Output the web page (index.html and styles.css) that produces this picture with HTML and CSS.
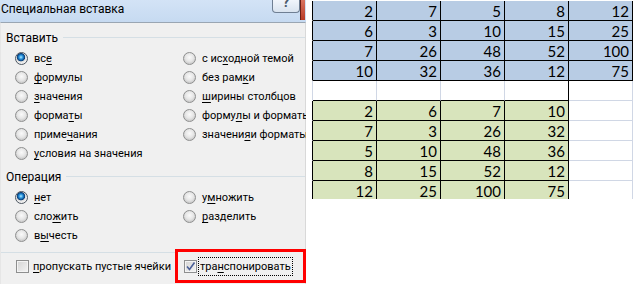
FILE: index.html
```html
<!DOCTYPE html>
<html lang="ru">
<head>
    <meta charset="UTF-8">
    <title>Специальная вставка</title>
    <link rel="stylesheet" href="styles.css">
</head>
<body>
<div class="screen">
    <div class="dialog">
        <div class="titlebar">
            <span class="title">Специальная вставка</span>
            <span class="help"><span>?</span></span>
            <span class="close"></span>
        </div>
        <div class="client">
            <div class="group-head"><span>Вставить</span></div>
            <div class="options">
                <div class="opt"><span class="radio on"></span>вс<u>е</u></div>
                <div class="opt"><span class="radio"></span>с ис<u>х</u>одной темой</div>
                <div class="opt"><span class="radio"></span><u>ф</u>ормулы</div>
                <div class="opt"><span class="radio"></span>без рам<u>к</u>и</div>
                <div class="opt"><span class="radio"></span><u>з</u>начения</div>
                <div class="opt"><span class="radio"></span><u>ш</u>ирины столбцов</div>
                <div class="opt"><span class="radio"></span>форма<u>т</u>ы</div>
                <div class="opt"><span class="radio"></span>форму<u>л</u>ы и форматы</div>
                <div class="opt"><span class="radio"></span>приме<u>ч</u>ания</div>
                <div class="opt"><span class="radio"></span>значени<u>я</u> и форматы</div>
                <div class="opt"><span class="radio"></span><u>у</u>словия на значения</div>
            </div>
            <div class="group-head second"><span>Операция</span></div>
            <div class="options">
                <div class="opt"><span class="radio on"></span><u>н</u>ет</div>
                <div class="opt"><span class="radio"></span>у<u>м</u>ножить</div>
                <div class="opt"><span class="radio"></span>сло<u>ж</u>ить</div>
                <div class="opt"><span class="radio"></span><u>р</u>азделить</div>
                <div class="opt"><span class="radio"></span>в<u>ы</u>честь</div>
            </div>
            <div class="bottom">
                <div class="skip">
                    <span class="check"></span><u>п</u>ропускать пустые ячейки
                </div>
                <div class="boxed">
                    <span class="check">
                        <svg width="11" height="11" viewBox="0 0 11 11"><path d="M2 5.5 L4.5 8.5 L9.5 1.5" fill="none" stroke="#4a5f97" stroke-width="1.6"/></svg>
                    </span>
                    <span class="focus">тра<u>н</u>спонировать</span>
                </div>
            </div>
        </div>
    </div>

    <div class="sheet-area">
        <div class="sheet">
            <div class="row">
                <div class="cell stub edge"></div>
                <div class="cell b">2</div><div class="cell b">7</div><div class="cell b">5</div><div class="cell b">8</div><div class="cell b">12</div>
            </div>
            <div class="row">
                <div class="cell stub edge"></div>
                <div class="cell b">6</div><div class="cell b">3</div><div class="cell b">10</div><div class="cell b">15</div><div class="cell b">25</div>
            </div>
            <div class="row">
                <div class="cell stub edge"></div>
                <div class="cell b">7</div><div class="cell b">26</div><div class="cell b">48</div><div class="cell b">52</div><div class="cell b">100</div>
            </div>
            <div class="row">
                <div class="cell stub edge"></div>
                <div class="cell b">10</div><div class="cell b">32</div><div class="cell b">36</div><div class="cell b">12</div><div class="cell b">75</div>
            </div>
            <div class="row">
                <div class="cell stub"></div>
                <div class="cell top"></div><div class="cell top"></div><div class="cell top"></div><div class="cell top edge"></div><div class="cell"></div>
            </div>
            <div class="row">
                <div class="cell stub edge"></div>
                <div class="cell g">2</div><div class="cell g">6</div><div class="cell g">7</div><div class="cell g">10</div><div class="cell"></div>
            </div>
            <div class="row">
                <div class="cell stub edge"></div>
                <div class="cell g">7</div><div class="cell g">3</div><div class="cell g">26</div><div class="cell g">32</div><div class="cell"></div>
            </div>
            <div class="row">
                <div class="cell stub edge"></div>
                <div class="cell g">5</div><div class="cell g">10</div><div class="cell g">48</div><div class="cell g">36</div><div class="cell"></div>
            </div>
            <div class="row">
                <div class="cell stub edge"></div>
                <div class="cell g">8</div><div class="cell g">15</div><div class="cell g">52</div><div class="cell g">12</div><div class="cell"></div>
            </div>
            <div class="row">
                <div class="cell stub edge"></div>
                <div class="cell g">12</div><div class="cell g">25</div><div class="cell g">100</div><div class="cell g">75</div><div class="cell"></div>
            </div>
        </div>
    </div>
</div>
</body>
</html>
```

FILE: styles.css
```css
body {
    margin: 0;
    padding: 0;
    background-color: white;
}

.screen {
    display: flex;
    width: 633px;
    height: 284px;
    overflow: hidden;
}

/* dialog */

.dialog {
    width: 306px;
    height: 284px;
    flex-shrink: 0;
    display: flex;
    flex-direction: column;
    overflow: hidden;
    font-family: Roboto, "Liberation Sans", sans-serif;
    font-size: 11px;
    color: #000;
}

.titlebar {
    height: 22px;
    flex-shrink: 0;
    display: flex;
    background: linear-gradient(to bottom, #d3e3f6, #c6daf1);
    font-size: 12px;
}

.title {
    flex: 1;
    padding-left: 1px;
    line-height: 18px;
}

.help {
    width: 26px;
    height: 12px;
    border: 1px solid #6f7f93;
    border-top: none;
    border-radius: 0 0 4px 4px;
    background: linear-gradient(to bottom, #f1f5fb, #d9e3ef);
    overflow: hidden;
    text-align: center;
    color: #4b5a6d;
    font-weight: bold;
    font-size: 14px;
    line-height: 10px;
}

.help span {
    display: block;
    margin-top: -3px;
}

.close {
    width: 4px;
    height: 20px;
    background: linear-gradient(to bottom, #d9735f, #b83b26);
    border-left: 1px solid #6b1f15;
    margin-right: 1px;
}

.client {
    flex: 1;
    background-color: #f0f0f0;
    border-top: 1px solid #9aa6b3;
    border-left: 1px solid #e6e6e6;
    border-right: 1px solid #d9d9d9;
}

.group-head {
    display: flex;
    align-items: center;
    height: 19px;
    margin-top: 5px;
    padding-left: 5px;
    font-size: 12px;
}

.group-head::after {
    content: "";
    flex: 1;
    height: 1px;
    margin-left: 5px;
    background-color: #d5dfe5;
}

.group-head.second {
    margin-top: 4px;
}

.options {
    display: grid;
    grid-template-columns: 168px 1fr;
    grid-auto-rows: 19px;
    margin-top: 2px;
    padding-left: 14px;
}

.opt {
    display: flex;
    align-items: center;
    white-space: nowrap;
}

u {
    text-decoration-thickness: 1px;
    text-underline-offset: 2px;
}

.radio {
    width: 11px;
    height: 11px;
    margin-right: 6px;
    border: 1px solid #8e8f8f;
    border-radius: 50%;
    background: radial-gradient(circle at 50% 40%, #fafafa 0, #e6e6e6 4px, #cfcfcf 6px);
    flex-shrink: 0;
}

.radio.on {
    border-color: #4d5661;
    background: radial-gradient(circle at 45% 38%, #b8ecff 0, #3aa3e6 1.6px, #1161a9 3px, #0d3e73 3.8px, #dedede 4.5px, #f0f0f0 6px);
}

.bottom {
    display: flex;
    height: 34px;
    margin-top: 4px;
}

.skip {
    flex: 1;
    min-width: 0;
    display: flex;
    align-items: center;
    margin-top: 3px;
    padding-left: 15px;
    padding-bottom: 3px;
    border-top: 1px solid #d5dfe5;
    white-space: nowrap;
}

.boxed {
    width: 131px;
    flex-shrink: 0;
    box-sizing: border-box;
    margin-right: -1px;
    display: flex;
    align-items: center;
    padding-left: 6px;
    border: 3px solid #f00;
    white-space: nowrap;
}

.check {
    width: 11px;
    height: 11px;
    flex-shrink: 0;
    margin-right: 4px;
    border: 1px solid #8e8f8f;
    background: linear-gradient(135deg, #d4d4d4, #f4f4f4);
    box-shadow: inset 0 0 0 1px #f4f4f4;
}

.check svg {
    display: block;
}

.boxed .check {
    margin-right: 1px;
}

.focus {
    border: 1px dotted #000;
    padding: 0 1px;
    line-height: 17px;
}

/* worksheet */

.sheet-area {
    flex: 1;
    background-color: white;
}

.sheet {
    height: 199px;
    padding-top: 1px;
    box-sizing: border-box;
    overflow: hidden;
    font-family: Lato, "Liberation Sans", sans-serif;
    font-size: 15px;
}

.row {
    display: flex;
}

.cell {
    width: 64px;
    height: 20px;
    box-sizing: border-box;
    flex-shrink: 0;
    border-right: 1px solid #d0d7e5;
    border-bottom: 1px solid #d0d7e5;
    padding: 1px 3px 0 0;
    text-align: right;
    line-height: 19px;
}

.cell.stub {
    width: 7px;
    border-bottom-color: white;
}

.cell.edge {
    border-right-color: #000;
}

.cell.top {
    border-bottom-color: #000;
}

.cell.b {
    background-color: #b8cce4;
    border-color: #000;
}

.cell.g {
    background-color: #d8e4bc;
    border-color: #000;
}
```
